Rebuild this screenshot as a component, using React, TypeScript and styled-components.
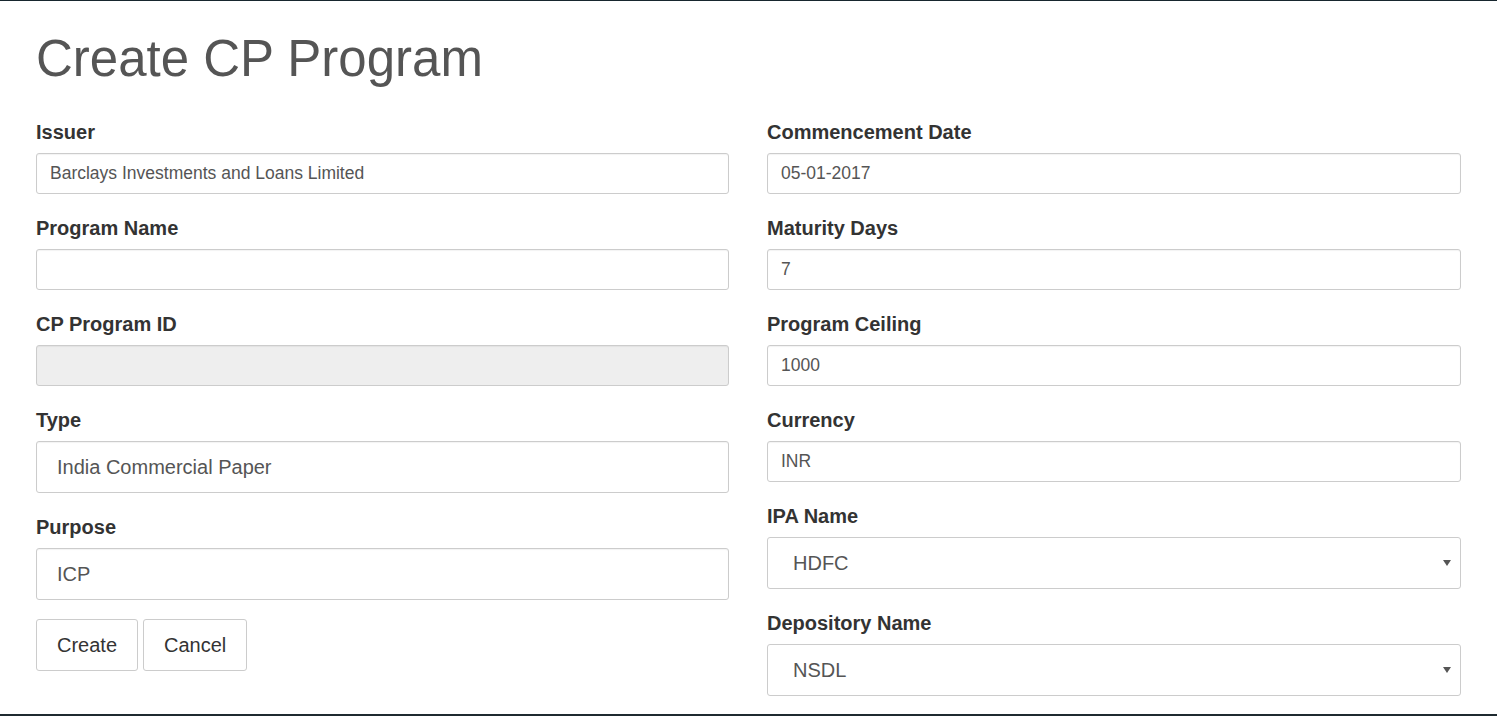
import React from 'react';
import styled, {createGlobalStyle} from 'styled-components';

const Global = createGlobalStyle`
  html, body {
    margin: 0;
    padding: 0;
    background: #fff;
  }
  body {
    font-family: "Liberation Sans", Arial, Helvetica, sans-serif;
    color: #333;
  }
  * { box-sizing: border-box; }
`

const Page = styled.div`
  width: 1497px;
  height: 716px;
  border-top: 1px solid #17262e;
  border-bottom: 2px solid #1f2a30;
  padding: 30px 36px 0 36px;
  overflow: hidden;
`

const Title = styled.h1`
  margin: 0 0 31px 0;
  font-size: 51px;
  line-height: 56px;
  font-weight: 400;
  color: #555;
`

const Columns = styled.div`
  display: grid;
  grid-template-columns: 693px 694px;
  column-gap: 38px;
`

const Column = styled.div`
  display: flex;
  flex-direction: column;
`

const Group = styled.div`
  display: flex;
  flex-direction: column;
  margin-bottom: 20px;
`

const Label = styled.label`
  font-size: 20px;
  line-height: 28px;
  font-weight: 700;
  color: #333;
  margin-bottom: 7px;
`

const Input = styled.input<{$large?: boolean}>`
  width: 100%;
  height: ${p => p.$large ? 52 : 41}px;
  padding: 0 ${p => p.$large ? 20 : 13}px;
  font-family: inherit;
  font-size: ${p => p.$large ? 20 : 17.5}px;
  color: #555;
  background: #fff;
  border: 1px solid #ccc;
  border-radius: 3px;
  box-shadow: inset 0 1px 1px rgba(0, 0, 0, .05);
  outline: none;
  &[disabled] {
    background: #eee;
  }
`

const SelectWrap = styled.div`
  position: relative;
`

const Select = styled.select`
  width: 100%;
  height: 52px;
  padding: 0 25px;
  font-family: inherit;
  font-size: 20px;
  color: #555;
  background: #fff;
  border: 1px solid #ccc;
  border-radius: 3px;
  appearance: none;
  -webkit-appearance: none;
  outline: none;
`

const Caret = styled.svg`
  position: absolute;
  right: 10px;
  top: 23px;
  width: 8px;
  height: 6px;
  pointer-events: none;
`

const Actions = styled.div`
  display: flex;
  gap: 5px;
  margin-top: -1px;
`

const Button = styled.button`
  height: 52px;
  padding: 0 20px;
  font-family: inherit;
  font-size: 20px;
  color: #333;
  background: #fff;
  border: 1px solid #ccc;
  border-radius: 3px;
  cursor: pointer;
`

type FieldProps = {
  label: string,
  value?: string,
  large?: boolean,
  disabled?: boolean
}

const Field = ({label, value, large, disabled}: FieldProps) => (
  <Group>
    <Label>{label}</Label>
    <Input defaultValue={value || ''} $large={large} disabled={disabled} type="text"/>
  </Group>
);

const SelectField = ({label, options}: {label: string, options: string[]}) => (
  <Group>
    <Label>{label}</Label>
    <SelectWrap>
      <Select defaultValue={options[0]}>
        {options.map(o => <option key={o}>{o}</option>)}
      </Select>
      <Caret viewBox="0 0 8 6"><polygon points="0,0 8,0 4,6" fill="#555"/></Caret>
    </SelectWrap>
  </Group>
);

export default function App() {
  return (
    <Page>
      <Global/>
      <Title>Create CP Program</Title>
      <Columns>
        <Column>
          <Field label="Issuer" value="Barclays Investments and Loans Limited"/>
          <Field label="Program Name"/>
          <Field label="CP Program ID" disabled/>
          <Field label="Type" value="India Commercial Paper" large/>
          <Field label="Purpose" value="ICP" large/>
          <Actions>
            <Button>Create</Button>
            <Button>Cancel</Button>
          </Actions>
        </Column>
        <Column>
          <Field label="Commencement Date" value="05-01-2017"/>
          <Field label="Maturity Days" value="7"/>
          <Field label="Program Ceiling" value="1000"/>
          <Field label="Currency" value="INR"/>
          <SelectField label="IPA Name" options={['HDFC', 'ICICI', 'SBI']}/>
          <SelectField label="Depository Name" options={['NSDL', 'CDSL']}/>
        </Column>
      </Columns>
    </Page>
  );
}
